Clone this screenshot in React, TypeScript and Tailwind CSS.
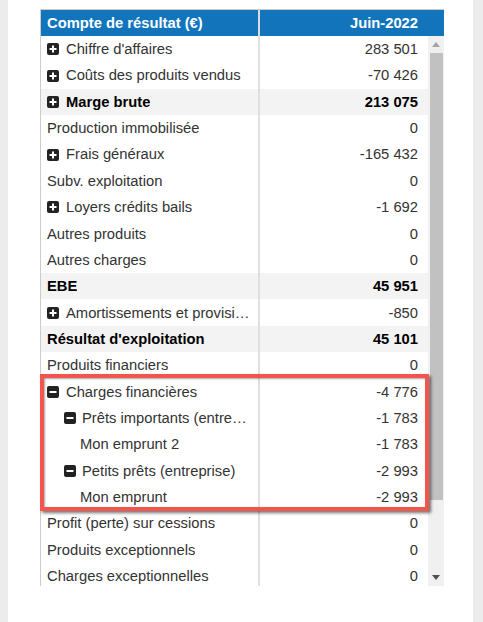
import React from 'react'

type Row = {
  label: string
  value: string
  level?: 0 | 1
  icon?: 'plus' | 'minus'
  bold?: boolean
}

const rows: Row[] = [
  { label: "Chiffre d'affaires", value: '283 501', icon: 'plus' },
  { label: 'Coûts des produits vendus', value: '-70 426', icon: 'plus' },
  { label: 'Marge brute', value: '213 075', icon: 'plus', bold: true },
  { label: 'Production immobilisée', value: '0' },
  { label: 'Frais généraux', value: '-165 432', icon: 'plus' },
  { label: 'Subv. exploitation', value: '0' },
  { label: 'Loyers crédits bails', value: '-1 692', icon: 'plus' },
  { label: 'Autres produits', value: '0' },
  { label: 'Autres charges', value: '0' },
  { label: 'EBE', value: '45 951', bold: true },
  { label: 'Amortissements et provisions', value: '-850', icon: 'plus' },
  { label: "Résultat d'exploitation", value: '45 101', bold: true },
  { label: 'Produits financiers', value: '0' },
  { label: 'Charges financières', value: '-4 776', icon: 'minus' },
  { label: 'Prêts importants (entreprise)', value: '-1 783', icon: 'minus', level: 1 },
  { label: 'Mon emprunt 2', value: '-1 783', level: 1 },
  { label: 'Petits prêts (entreprise)', value: '-2 993', icon: 'minus', level: 1 },
  { label: 'Mon emprunt', value: '-2 993', level: 1 },
  { label: 'Profit (perte) sur cessions', value: '0' },
  { label: 'Produits exceptionnels', value: '0' },
  { label: 'Charges exceptionnelles', value: '0' },
]

function ToggleIcon({ kind }: { kind: 'plus' | 'minus' }) {
  return (
    <svg width="12" height="12" viewBox="0 0 12 12" className="shrink-0">
      <rect x="0" y="0" width="12" height="12" rx="2" fill="#222" />
      <rect x="2.5" y="5" width="7" height="2" fill="#fff" />
      {kind === 'plus' && <rect x="5" y="2.5" width="2" height="7" fill="#fff" />}
    </svg>
  )
}

function Label({ row }: { row: Row }) {
  let pad = 'pl-[6px]'
  if (row.level === 1) pad = row.icon ? 'pl-[23px]' : 'pl-[39px]'

  return (
    <div className={`flex items-center w-[217px] h-full pr-[6px] ${pad} ${row.icon ? (row.level === 1 ? 'gap-[6px]' : 'gap-[7px]') : ''}`}>
      {row.icon && <ToggleIcon kind={row.icon} />}
      <span className="truncate">{row.label}</span>
    </div>
  )
}

export default function App() {
  return (
    <div
      className="relative h-[622px] w-[483px] bg-[#ececec] pl-[8px] overflow-hidden"
      style={{ fontFamily: '"Liberation Sans", Arial, sans-serif' }}
    >
      <div className="h-full w-[465px] bg-white pt-[9px] pl-[32px]">
        <div className="w-[404px] border-l border-t border-[#cccccc] text-[14.75px] text-[#333]">
          {/* header */}
          <div className="flex h-[26px] bg-[#1275bc] font-bold text-white">
            <div className="w-[217px] pl-[6px] flex items-center">Compte de résultat (€)</div>
            <div className="w-[2px] bg-[#d7dde3]" />
            <div className="flex-1 flex items-center justify-end pr-[26px]">Juin-2022</div>
          </div>

          {/* body */}
          <div className="flex h-[550px] overflow-hidden">
            <div className="w-[387px]">
              {rows.map((row) => (
                <div
                  key={row.label}
                  className={`flex h-[26.35px] ${row.bold ? 'bg-[#f3f3f3] font-bold text-black' : ''}`}
                >
                  <Label row={row} />
                  <div className="w-[2px] bg-[#e0e0e0]" />
                  <div className="flex-1 flex items-center justify-end pr-[10px]">{row.value}</div>
                </div>
              ))}
            </div>

            {/* scrollbar */}
            <div className="w-[16px] bg-[#f0f0f0] flex flex-col items-center">
              <div className="h-[17px] flex items-center justify-center">
                <svg width="8" height="5" viewBox="0 0 8 5">
                  <path d="M0 5 L4 0 L8 5 Z" fill="#a3a3a3" />
                </svg>
              </div>
              <div className="w-[13px] h-[447px] bg-[#c1c1c1]" />
              <div className="flex-1" />
              <div className="h-[17px] flex items-center justify-center">
                <svg width="8" height="5" viewBox="0 0 8 5">
                  <path d="M0 0 L8 0 L4 5 Z" fill="#505050" />
                </svg>
              </div>
            </div>
          </div>
        </div>
      </div>

      {/* highlight */}
      <div className="absolute left-[40px] top-[374px] w-[389px] h-[137px] border-[4px] border-[#f1554b] shadow-[2px_2px_3px_rgba(0,0,0,0.55),inset_1px_1px_2px_rgba(0,0,0,0.35)]" />
    </div>
  )
}
